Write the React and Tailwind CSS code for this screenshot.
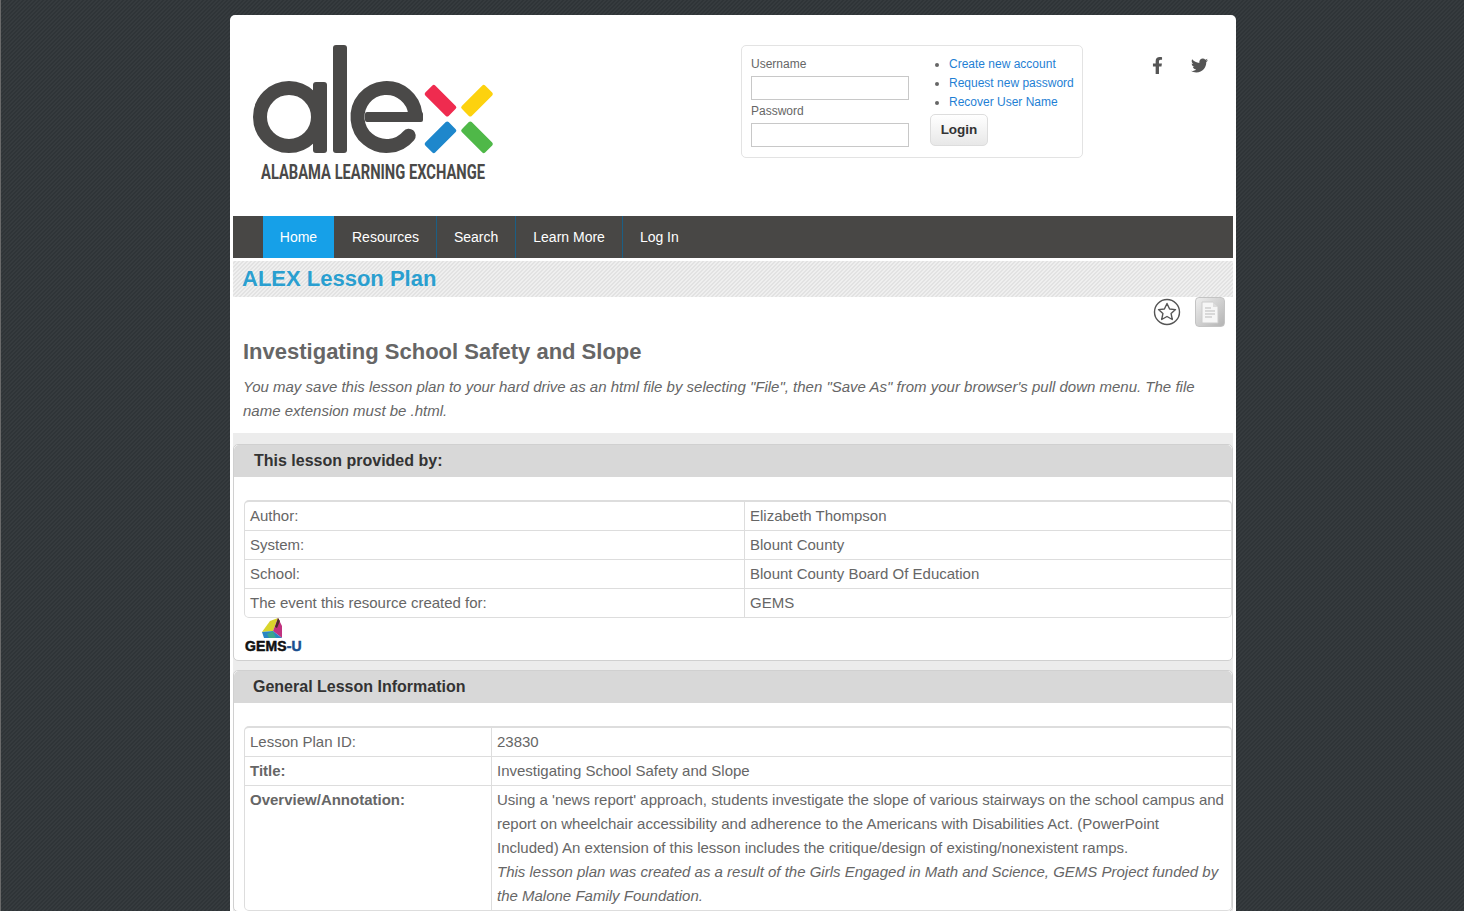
import { FaFacebookF, FaTwitter } from "react-icons/fa";

const navItems = ["Resources", "Search", "Learn More", "Log In"];

const accountLinks = ["Create new account", "Request new password", "Recover User Name"];

const AlexLogo = () => {
  return (
    <svg width="250" height="145" viewBox="250 40 250 145" className="block">
      <circle cx="289" cy="117" r="29" fill="none" stroke="#4a4948" strokeWidth="14" />
      <rect x="313" y="82" width="14" height="71" rx="3" fill="#4a4948" />
      <rect x="333" y="45" width="14" height="108" rx="3" fill="#4a4948" />
      <circle
        cx="386.5"
        cy="117"
        r="29"
        fill="none"
        stroke="#4a4948"
        strokeWidth="14"
        strokeLinecap="round"
        strokeDasharray="158 24.2"
        transform="rotate(40 386.5 117)"
      />
      <rect x="365" y="112" width="58" height="10" rx="2" fill="#4a4948" />
      <rect x="424" y="93.7" width="33" height="14" rx="2" fill="#ef2b4f" transform="rotate(45 440.5 100.7)" />
      <rect x="460.5" y="93.7" width="33" height="14" rx="2" fill="#fdd20e" transform="rotate(-45 477 100.7)" />
      <rect x="424" y="130.3" width="33" height="14" rx="2" fill="#1e87cc" transform="rotate(-45 440.5 137.3)" />
      <rect x="460.5" y="130.3" width="33" height="14" rx="2" fill="#4fb848" transform="rotate(45 477 137.3)" />
      <text
        x="261"
        y="179"
        textLength="224"
        lengthAdjust="spacingAndGlyphs"
        fill="#4a4948"
        fontSize="20"
        fontWeight="700"
        fontFamily="Roboto, sans-serif"
      >
        ALABAMA LEARNING EXCHANGE
      </text>
    </svg>
  );
};

const LoginBox = () => {
  return (
    <div className="flex w-[342px] h-[113px] border border-[#e3e3e3] rounded-[5px] pl-[9px] pt-[10px] text-xs text-[#666]">
      <div className="w-[158px]">
        <label className="block h-[20px] leading-[16px]">Username</label>
        <input className="block w-[158px] h-[24px] border border-[#c8c8c8]" />
        <label className="block h-[23px] leading-[22px]">Password</label>
        <input className="block w-[158px] h-[24px] border border-[#c8c8c8]" />
      </div>
      <div className="ml-[21px] -mt-[1px]">
        <ul className="list-disc pl-[19px] leading-[19px] text-[#1f7fd4]">
          {accountLinks.map((link) => {
            return (
              <li key={link} className="marker:text-[#666]">
                {link}
              </li>
            );
          })}
        </ul>
        <button className="mt-[2px] w-[58px] h-[32px] rounded-[5px] border border-[#ddd] bg-gradient-to-b from-white to-[#e8e8e8] text-[13.5px] font-bold text-[#333]">
          Login
        </button>
      </div>
    </div>
  );
};

const GemsLogo = () => {
  return (
    <div className="w-[60px] h-[42px] ml-[1px]">
      <svg width="22" height="22" viewBox="0 0 22 22" className="block ml-[17px]">
        <polygon points="16,0 8,3 0,14 11,13" fill="#d9d52c" />
        <polygon points="16,0 11,13 20,20 20,8" fill="#c0327f" />
        <polygon points="16,0 13,9 15,10 18,3" fill="#4a2f2a" />
        <polygon points="0,14 11,13 20,20 2,20" fill="#2a86c4" />
        <polygon points="5,16 11,13 14,20 7,20" fill="#3aa58d" />
      </svg>
      <div className="text-[14px] leading-[12px] font-bold tracking-[0.1px] whitespace-nowrap [-webkit-text-stroke:0.5px_currentColor] text-[#111]">
        GEMS<span className="text-[#1a4f8f]">-U</span>
      </div>
    </div>
  );
};

const Panel = ({ title, titleClass, children }) => {
  return (
    <section className="border border-[#d0d0d0] rounded-[5px] bg-white">
      <h2 className={`h-[32px] bg-[#d8d8d8] rounded-t-[5px] text-base font-bold leading-[31px] text-[#333] ${titleClass}`}>
        {title}
      </h2>
      <div className="pt-[23px] pl-[10px]">{children}</div>
    </section>
  );
};

const InfoTable = ({ firstCol, rows }) => {
  return (
    <div className="border-2 border-r border-b border-l border-[#ddd] rounded-[5px]">
      {rows.map((row, i) => {
        return (
          <div key={i} className={i > 0 ? "flex border-t border-[#ddd]" : "flex"}>
            <div className={`${firstCol} shrink-0 px-[5px] py-[2px] leading-[24px] ${row.bold ? "font-bold" : ""}`}>
              {row.label}
            </div>
            <div className="flex-1 border-l border-[#ddd] px-[5px] py-[2px] leading-[24px]">{row.value}</div>
          </div>
        );
      })}
    </div>
  );
};

const providerRows = [
  { label: "Author:", value: "Elizabeth Thompson" },
  { label: "System:", value: "Blount County" },
  { label: "School:", value: "Blount County Board Of Education" },
  { label: "The event this resource created for:", value: "GEMS" },
];

const lessonRows = [
  { label: "Lesson Plan ID:", value: "23830" },
  { label: "Title:", value: "Investigating School Safety and Slope", bold: true },
  {
    label: "Overview/Annotation:",
    bold: true,
    value: (
      <>
        Using a 'news report' approach, students investigate the slope of various stairways on the school campus and
        report on wheelchair accessibility and adherence to the Americans with Disabilities Act. (PowerPoint
        <br />
        Included) An extension of this lesson includes the critique/design of existing/nonexistent ramps.
        <br />
        <em>
          This lesson plan was created as a result of the Girls Engaged in Math and Science, GEMS Project funded by the
          Malone Family Foundation.
        </em>
      </>
    ),
  },
];

const App = () => {
  return (
    <div className="h-[911px] overflow-hidden border-l border-[#6a6a6a] pl-[229px] pt-[15px] font-['Liberation_Sans',Arial,sans-serif] bg-[repeating-linear-gradient(135deg,#363b3e_0px,#363b3e_1.414px,#2f3437_1.414px,#2f3437_2.828px)]">
      <div className="w-[1006px] bg-white rounded-t-[5px] px-[3px] text-[15px] text-[#666]">
        <header className="flex h-[201px]">
          <div className="w-[508px] pt-[25px] pl-[17px]">
            <AlexLogo />
          </div>
          <div className="pt-[30px]">
            <LoginBox />
          </div>
          <div className="flex pt-[42px] pl-[66px] gap-[25px] text-[#555]">
            <FaFacebookF size={17} />
            <FaTwitter size={17} />
          </div>
        </header>

        <nav className="flex h-[42px] pl-[30px] bg-[#484745] text-sm leading-[42px] text-white">
          <a className="w-[71px] text-center bg-[#16a0e8] mr-[1px]">Home</a>
          {navItems.map((item) => {
            return (
              <a key={item} className="px-[17px] border-r border-[#1b5f85] last:border-r-0">
                {item}
              </a>
            );
          })}
        </nav>

        <div className="mt-[3px] h-[36px] pl-[9px] bg-[repeating-linear-gradient(135deg,#efefef_0px,#efefef_1.414px,#e2e2e2_1.414px,#e2e2e2_2.828px)]">
          <h1 className="text-[22px] font-bold leading-[36px] text-[#2a9fd0]">ALEX Lesson Plan</h1>
        </div>

        <div className="flex justify-end items-start h-[30px] pr-[8px] gap-[14px]">
          <svg width="28" height="28" viewBox="0 0 28 28" className="mt-[1px]">
            <circle cx="14" cy="14" r="12.5" fill="none" stroke="#555" strokeWidth="1.4" />
            <polygon
              points="14,5.5 16.6,11 22.5,11.6 18.1,15.6 19.3,21.5 14,18.5 8.7,21.5 9.9,15.6 5.5,11.6 11.4,11"
              fill="none"
              stroke="#555"
              strokeWidth="1.4"
              strokeLinejoin="round"
            />
          </svg>
          <div className="flex items-center justify-center w-[30px] h-[30px] rounded-[4px] border border-[#c4c4c4] bg-gradient-to-br from-[#eeeeee] to-[#b4b4b4]">
            <svg width="18" height="23" viewBox="0 0 18 23">
              <polygon points="1,1 12,1 17,6 17,22 1,22" fill="#f6f6f6" stroke="#ccc" />
              <polygon points="12,1 12,6 17,6" fill="#ddd" />
              <path d="M4 7h6M4 10h10M4 13h10M4 16h7" stroke="#bbb" strokeWidth="1" />
            </svg>
          </div>
        </div>

        <div className="pl-[10px] pr-[8px] pb-[10px]">
          <h2 className="text-[22px] font-bold leading-[26px] mt-[12px] text-[#666]">
            Investigating School Safety and Slope
          </h2>
          <p className="italic leading-[24px] mt-[10px]">
            You may save this lesson plan to your hard drive as an html file by selecting "File", then "Save As" from
            your browser's pull down menu. The file name extension must be .html.
          </p>
        </div>

        <div className="bg-[#ececec] pt-[11px] flex flex-col gap-[9px]">
          <Panel title="This lesson provided by:" titleClass="pl-[20px]">
            <InfoTable firstCol="w-[499px]" rows={providerRows} />
            <GemsLogo />
          </Panel>
          <Panel title="General Lesson Information" titleClass="pl-[19px]">
            <InfoTable firstCol="w-[246px]" rows={lessonRows} />
          </Panel>
        </div>
      </div>
    </div>
  );
};

export default App;
